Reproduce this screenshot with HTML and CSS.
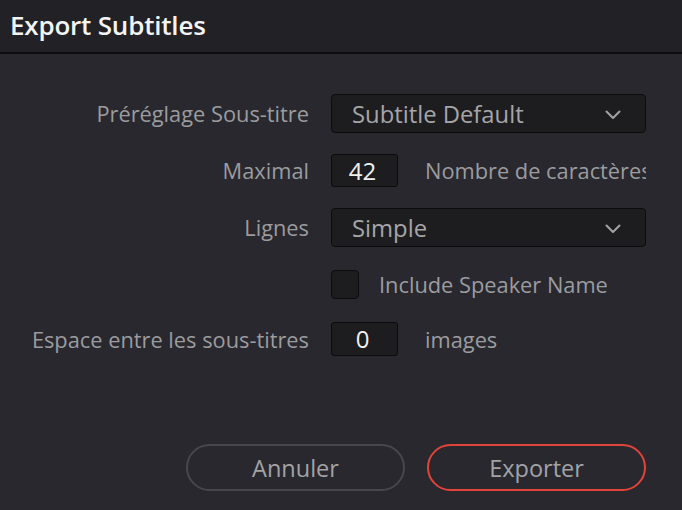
FILE: index.html
```html
<!DOCTYPE html>
<html lang="fr">
<head>
<meta charset="utf-8">
<title>Export Subtitles</title>
<link rel="stylesheet" href="styles.css">
</head>
<body>
<div class="dialog">
  <header class="titlebar">
    <h1 class="title">Export Subtitles</h1>
  </header>
  <main class="content">
    <div class="form">
      <div class="label">Préréglage Sous-titre</div>
      <div class="field">
        <div class="select"><span>Subtitle Default</span>
          <svg class="chev" width="16" height="10" viewBox="0 0 16 10"><path d="M1.5 1.5 L8 8 L14.5 1.5" fill="none" stroke="#a3a3a6" stroke-width="2" stroke-linecap="round" stroke-linejoin="round"/></svg>
        </div>
      </div>

      <div class="label">Maximal</div>
      <div class="field inline">
        <div class="num">42</div>
        <span class="after">Nombre de caractères</span>
      </div>

      <div class="label">Lignes</div>
      <div class="field">
        <div class="select"><span>Simple</span>
          <svg class="chev" width="16" height="10" viewBox="0 0 16 10"><path d="M1.5 1.5 L8 8 L14.5 1.5" fill="none" stroke="#a3a3a6" stroke-width="2" stroke-linecap="round" stroke-linejoin="round"/></svg>
        </div>
      </div>

      <div class="label"></div>
      <div class="field inline">
        <div class="checkbox"></div>
        <span class="after check-label">Include Speaker Name</span>
      </div>

      <div class="label">Espace entre les sous-titres</div>
      <div class="field inline">
        <div class="num">0</div>
        <span class="after">images</span>
      </div>
    </div>
    <div class="actions">
      <button class="btn cancel">Annuler</button>
      <button class="btn primary">Exporter</button>
    </div>
  </main>
</div>
</body>
</html>
```
FILE: styles.css
```css
* { box-sizing: border-box; }
html, body { margin: 0; padding: 0; }
body {
  width: 682px;
  height: 510px;
  overflow: hidden;
  background: #28282e;
  font-family: "Open Sans", "Noto Sans", sans-serif;
}
.dialog {
  display: flex;
  flex-direction: column;
  height: 510px;
}
.titlebar {
  height: 54px;
  background: #212126;
  border-bottom: 2px solid #0e0e10;
  display: flex;
  align-items: center;
  padding-left: 10px;
}
.title {
  margin: 0;
  font-size: 26px;
  font-weight: 600;
  color: #f4f4f4;
  letter-spacing: -0.2px;
  margin-top: -3px;
}
.content {
  flex: 1;
  display: flex;
  flex-direction: column;
  padding: 40px 36px 19px 0;
}
.form {
  display: grid;
  grid-template-columns: 309px 315px;
  column-gap: 22px;
  grid-template-rows: 39px 33px 39px 33px 34px;
  row-gap: 21px;
}
.label {
  text-align: right;
  font-size: 21.8px;
  color: #9c9c9f;
  align-self: center;
  white-space: nowrap;
}
.field { min-width: 0; }
.inline {
  display: flex;
  align-items: center;
  overflow: hidden;
  white-space: nowrap;
}
.select {
  height: 39px;
  background: #1d1d20;
  border: 1px solid #0c0c0d;
  border-radius: 4px;
  display: flex;
  align-items: center;
  justify-content: space-between;
  padding: 0 24px 0 20px;
  font-size: 23.8px;
  color: #a6a6a8;
}
.chev { margin-top: 2px; }
.num {
  width: 67px;
  height: 100%;
  flex: none;
  background: #1d1d20;
  border: 1px solid #0c0c0d;
  border-radius: 3px;
  color: #f0f0f0;
  font-size: 24px;
  text-align: center;
  line-height: 31px;
  padding-right: 4px;
}
.after {
  margin-left: 27px;
  font-size: 21.8px;
  color: #9c9c9f;
}
.checkbox {
  width: 28px;
  height: 29px;
  flex: none;
  background: #1d1d20;
  border: 1px solid #0c0c0d;
  border-radius: 4px;
}
.check-label { margin-left: 20px; }
.actions {
  margin-top: auto;
  display: flex;
  justify-content: flex-end;
  gap: 22px;
}
.btn {
  width: 219px;
  height: 47px;
  border-radius: 24px;
  background: transparent;
  font-family: "Open Sans", "Noto Sans", sans-serif;
  font-size: 23.5px;
  color: #a3a3a6;
  padding: 0;
}
.cancel { border: 2px solid #46484d; }
.primary { border: 2px solid #e2443a; }
```
